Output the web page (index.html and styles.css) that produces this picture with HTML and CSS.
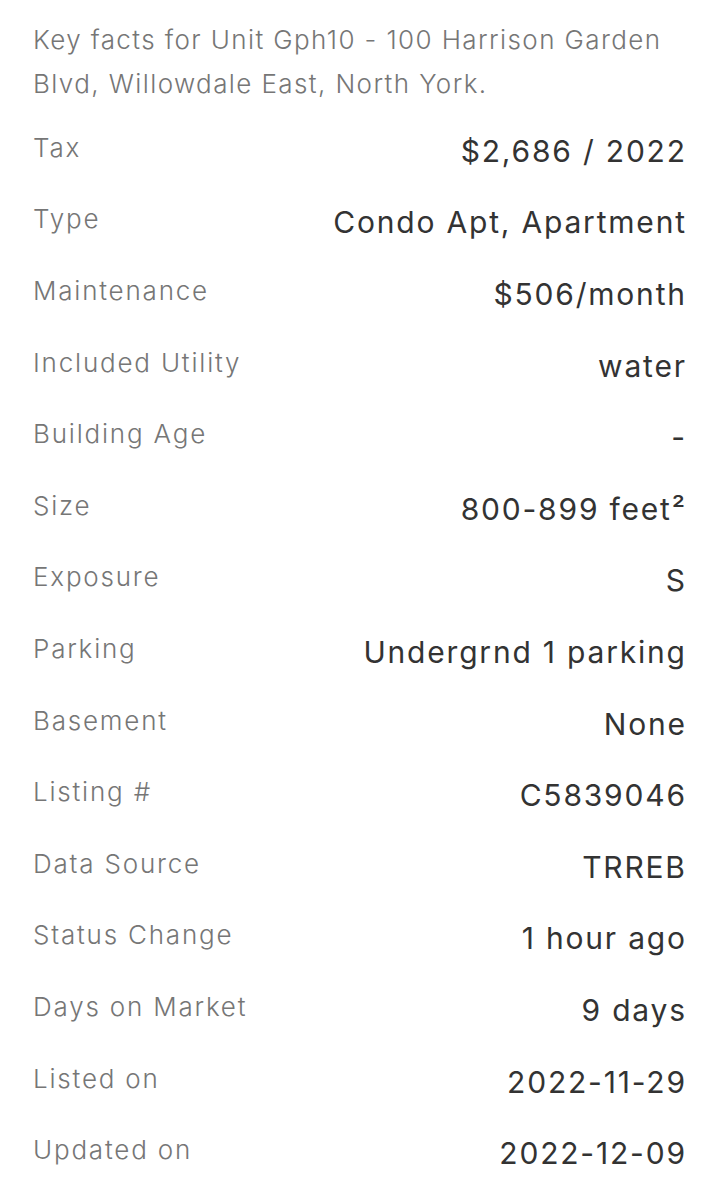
FILE: index.html
```html
<!DOCTYPE html>
<html lang="en">
<head>
  <meta charset="UTF-8">
  <meta name="viewport" content="width=device-width, initial-scale=1.0">
  <title>Key Facts</title>
  <link rel="stylesheet" href="styles.css">
</head>
<body>
  <div class="facts">
    <p class="intro">Key facts for Unit Gph10 - 100 Harrison Garden Blvd, Willowdale East, North York.</p>

    <div class="row"><span class="label">Tax</span><span class="value">$2,686 / 2022</span></div>
    <div class="row"><span class="label">Type</span><span class="value">Condo Apt, Apartment</span></div>
    <div class="row"><span class="label">Maintenance</span><span class="value">$506/month</span></div>
    <div class="row"><span class="label">Included Utility</span><span class="value">water</span></div>
    <div class="row"><span class="label">Building Age</span><span class="value">-</span></div>
    <div class="row"><span class="label">Size</span><span class="value">800-899 feet²</span></div>
    <div class="row"><span class="label">Exposure</span><span class="value">S</span></div>
    <div class="row"><span class="label">Parking</span><span class="value">Undergrnd 1 parking</span></div>
    <div class="row"><span class="label">Basement</span><span class="value">None</span></div>
    <div class="row"><span class="label">Listing #</span><span class="value">C5839046</span></div>
    <div class="row"><span class="label">Data Source</span><span class="value">TRREB</span></div>
    <div class="row"><span class="label">Status Change</span><span class="value">1 hour ago</span></div>
    <div class="row"><span class="label">Days on Market</span><span class="value">9 days</span></div>
    <div class="row"><span class="label">Listed on</span><span class="value">2022-11-29</span></div>
    <div class="row"><span class="label">Updated on</span><span class="value">2022-12-09</span></div>
  </div>
</body>
</html>
```

FILE: styles.css
```css
body {
  margin: 0;
  padding: 0;
  background-color: #ffffff;
  font-family: Inter, "Noto Sans", sans-serif;
}
.facts {
  padding: 18px 32px 0 33px;
}
.intro {
  margin: 0 0 8px 0;
  font-size: 26px;
  line-height: 44px;
  font-weight: 300;
  letter-spacing: 1.4px;
  color: #767676;
}
.row {
  display: flex;
  justify-content: space-between;
  align-items: center;
  height: 71.6px;
}
.label {
  font-size: 26px;
  font-weight: 300;
  letter-spacing: 1.8px;
  color: #767676;
  margin-top: -5px;
}
.value {
  font-size: 30px;
  font-weight: 400;
  letter-spacing: 1.8px;
  color: #333333;
  margin-top: 2px;
  margin-right: -1.8px;
}
```
